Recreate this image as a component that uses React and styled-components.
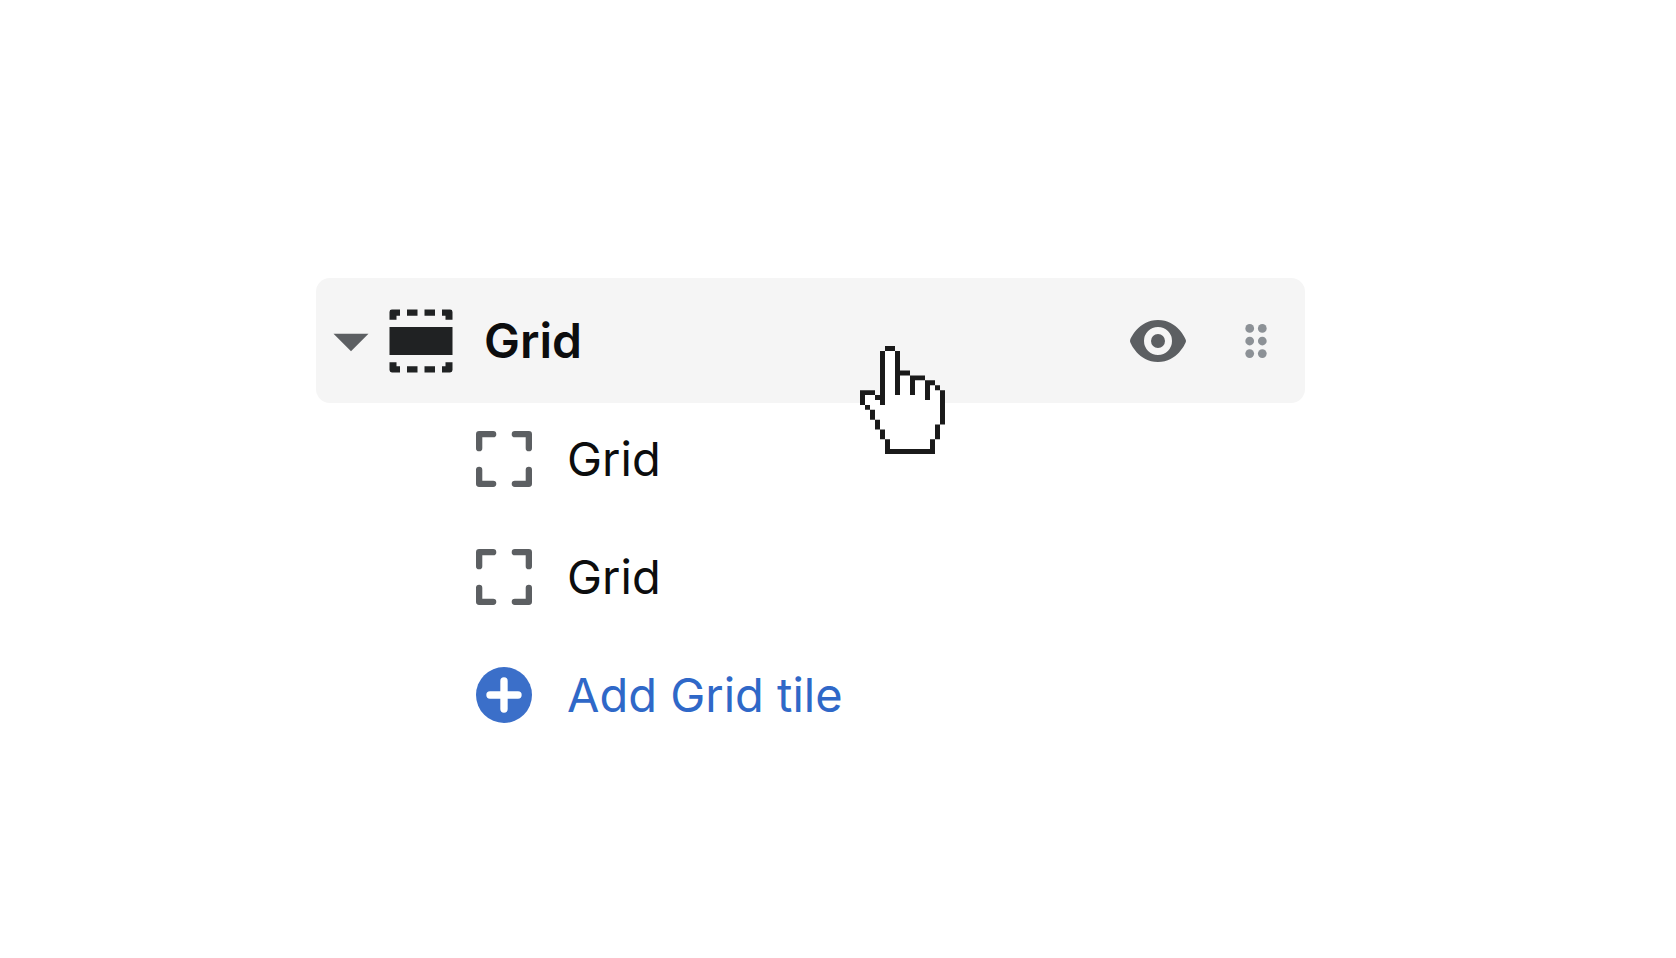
import React, { useState } from "react";
import styled, { createGlobalStyle } from "styled-components";

const GlobalStyle = createGlobalStyle`
  * {
    box-sizing: border-box;
  }

  body {
    margin: 0;
    background: #ffffff;
    color: #0c0d0e;
    font-family: Inter, "Liberation Sans", sans-serif;
  }
`;

const Page = styled.main`
  padding: 278px 371px 100px 316px;
`;

const SectionRow = styled.div`
  position: relative;
  display: flex;
  align-items: center;
  height: 125px;
  padding-right: 14px;
  border-radius: 14px;
  background: #f5f5f5;
`;

const Title = styled.h2`
  flex: 1;
  margin: 0 0 0 28px;
  font-size: 48px;
  font-weight: 600;
  line-height: 60px;
`;

const Actions = styled.div`
  display: flex;
  gap: 28px;
`;

const IconButton = styled.button`
  display: flex;
  padding: 0;
  border: 0;
  background: none;
  color: ${({ $subdued }) => ($subdued ? "#8c9196" : "#5c5f62")};
  cursor: pointer;
`;

const Svg = styled.svg`
  display: block;
  flex: none;
  width: 70px;
  height: 70px;
  fill: currentColor;
`;

const BlockList = styled.ul`
  display: flex;
  flex-direction: column;
  gap: 6px;
  margin: 0;
  padding: 0 0 0 153px;
  list-style: none;
`;

const BlockRow = styled.li`
  display: flex;
  align-items: center;
  gap: 28px;
  height: 112px;
  font-size: 47px;
  line-height: 60px;

  svg {
    color: #5c5f62;
  }
`;

const AddButton = styled.button`
  display: flex;
  align-items: center;
  gap: 28px;
  padding: 0;
  border: 0;
  background: none;
  color: #2f68c8;
  font: inherit;
  cursor: pointer;

  svg {
    color: #3b6fc9;
  }
`;

const Pointer = styled.svg`
  position: absolute;
  top: 68px;
  left: 55%;
  width: 85px;
  height: 108px;
  pointer-events: none;
`;

const Icon = ({ children }) => (
  <Svg viewBox="0 0 20 20" aria-hidden="true">
    {children}
  </Svg>
);

const CaretIcon = () => (
  <Icon>
    <path d="M5 7.9h10l-5 5z" />
  </Icon>
);

const SectionIcon = () => (
  <Icon>
    <g fill="#202223">
      <path d="M1 3.9V1.7a.7.7 0 0 1 .7-.7H4v1.8H3v1.1z" />
      <path d="M6 1h3v1.8H6zM11 1h3v1.8h-3z" />
      <path d="M16 1h2.3a.7.7 0 0 1 .7.7v2.2h-2V2.8h-1z" />
      <path d="M1 6h18v8H1z" />
      <path d="M1 16.1v2.2a.7.7 0 0 0 .7.7H4v-1.8H3v-1.1z" />
      <path d="M6 17.2h3V19H6zM11 17.2h3V19h-3z" />
      <path d="M16 19h2.3a.7.7 0 0 0 .7-.7v-2.2h-2v1.1h-1z" />
    </g>
  </Icon>
);

const EyeIcon = () => (
  <Icon>
    <path
      fillRule="evenodd"
      d="M17.928 9.628C17.836 9.399 15.611 4 10 4S2.163 9.399 2.07 9.628a1.017 1.017 0 0 0 0 .744C2.163 10.601 4.388 16 10 16s7.836-5.399 7.928-5.628a1.017 1.017 0 0 0 0-.744zM10 14a4 4 0 1 1 0-8 4 4 0 0 1 0 8zm0-6a2 2 0 1 0 0 4 2 2 0 0 0 0-4z"
    />
  </Icon>
);

const DragIcon = () => (
  <Icon>
    {[6.4, 10, 13.6].map((y) => (
      <React.Fragment key={y}>
        <circle cx="8.2" cy={y} r="1.25" />
        <circle cx="11.8" cy={y} r="1.25" />
      </React.Fragment>
    ))}
  </Icon>
);

const BlockIcon = () => (
  <Icon>
    <path
      fill="none"
      stroke="currentColor"
      strokeWidth="1.8"
      strokeLinecap="round"
      strokeLinejoin="round"
      d="M2.9 6.9v-4h4M13.1 2.9h4v4M17.1 13.1v4h-4M6.9 17.1h-4v-4"
    />
  </Icon>
);

const PlusIcon = () => (
  <Icon>
    <circle cx="10" cy="10" r="8" />
    <path
      stroke="#ffffff"
      strokeWidth="2.1"
      strokeLinecap="round"
      d="M10 6v8M6 10h8"
    />
  </Icon>
);

const HandPointer = () => (
  <Pointer viewBox="0 0 17 22" preserveAspectRatio="none" aria-hidden="true">
    <path
      fill="#ffffff"
      d="M5 1h2v5h3v1h3v1h2v1h1v7h-1v3h-1v2H6v-2H5v-2H4v-2H3v-2H2v-1H1v-2h2v1h2z"
    />
    <path
      fill="#1a1a1a"
      d="M5 0h2v1H5zM4 1h1v11H4zM7 1h1v9H7zM8 5h2v1H8zM10 6h3v1h-2v3h-1zM13 7h2v1h-1v3h-1zM15 8h1v1h-1zM16 9h1v7h-1zM15 16h1v3h-1zM14 19h1v3H5v-3h1v2h8zM4 17h1v2H4zM3 15h1v2H3zM2 13h1v2H2zM1 12h1v1H1zM0 9h3v1H1v2H0zM3 10h1v1H3z"
    />
  </Pointer>
);

const App = () => {
  const [open, setOpen] = useState(true);
  const [blocks, setBlocks] = useState(["Grid", "Grid"]);

  return (
    <>
      <GlobalStyle />
      <Page>
        <SectionRow>
          <IconButton
            type="button"
            aria-label="Toggle blocks"
            aria-expanded={open}
            onClick={() => setOpen(!open)}
          >
            <CaretIcon />
          </IconButton>
          <SectionIcon />
          <Title>Grid</Title>
          <Actions>
            <IconButton type="button" aria-label="Hide section">
              <EyeIcon />
            </IconButton>
            <IconButton type="button" aria-label="Reorder section" $subdued>
              <DragIcon />
            </IconButton>
          </Actions>
          <HandPointer />
        </SectionRow>
        {open && (
          <BlockList>
            {blocks.map((name, index) => (
              <BlockRow key={index}>
                <BlockIcon />
                {name}
              </BlockRow>
            ))}
            <BlockRow>
              <AddButton
                type="button"
                onClick={() => setBlocks([...blocks, "Grid"])}
              >
                <PlusIcon />
                Add Grid tile
              </AddButton>
            </BlockRow>
          </BlockList>
        )}
      </Page>
    </>
  );
};

export default App;
